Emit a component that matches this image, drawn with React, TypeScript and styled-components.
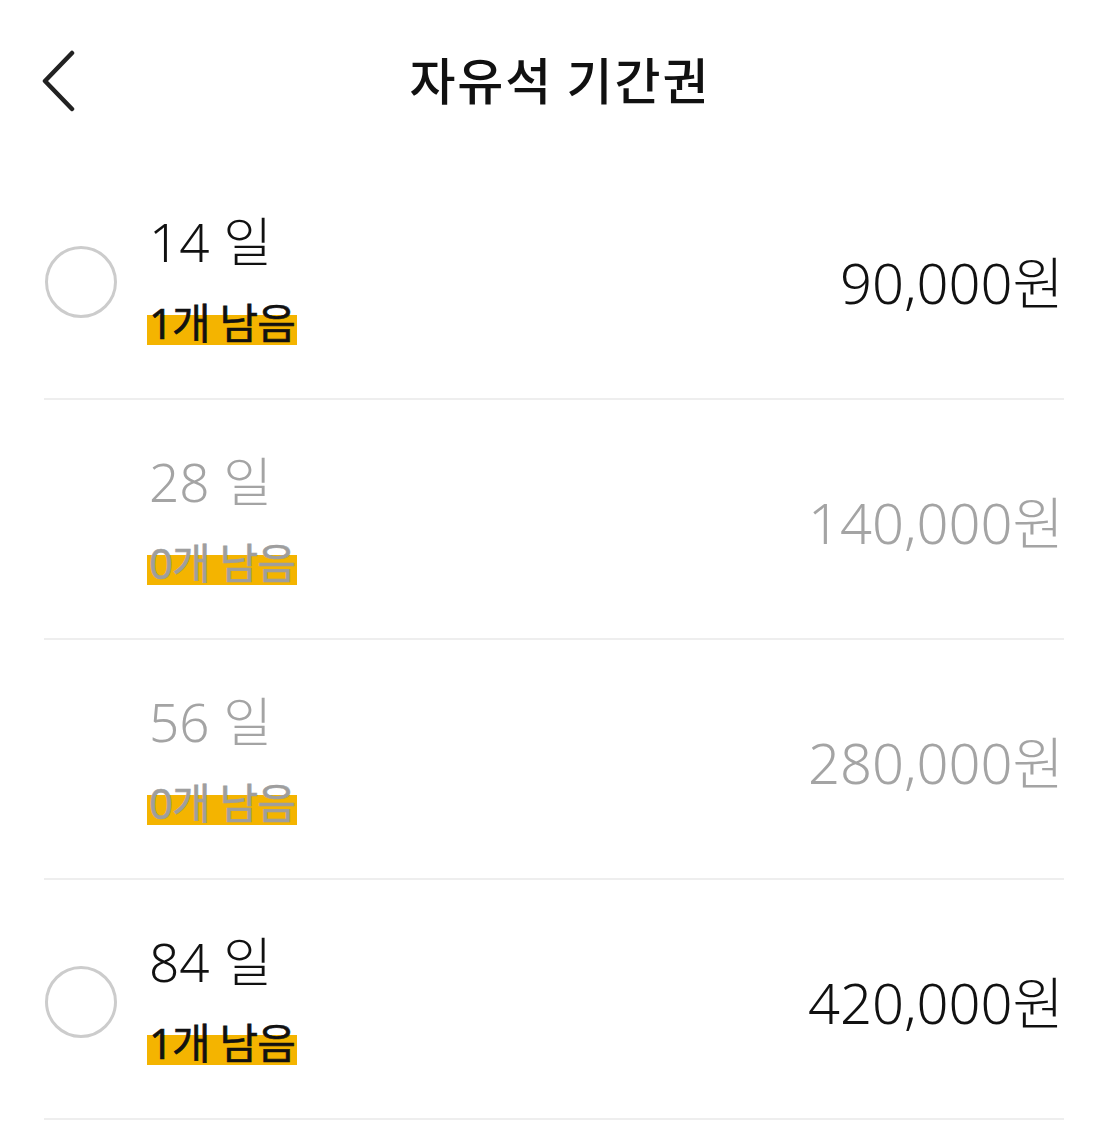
import styled, { createGlobalStyle } from 'styled-components';

interface Pass {
    days: number;
    left: number;
    price: string;
}

const passes: Pass[] = [
    { days: 14, left: 1, price: '90,000원' },
    { days: 28, left: 0, price: '140,000원' },
    { days: 56, left: 0, price: '280,000원' },
    { days: 84, left: 1, price: '420,000원' },
];

const GlobalStyle = createGlobalStyle`
    body {
        margin: 0;
        background: #fff;
        font-family: "Noto Sans", "Noto Sans CJK KR", sans-serif;
        color: #111;
    }
`;

const App = () => {
    return (
        <>
            <GlobalStyle />
            <Page>
                <Header>
                    <BackButton aria-label='back'>
                        <svg width='36' height='62' viewBox='0 0 36 62' fill='none'>
                            <path
                                d='M32 3 L5 31 L32 59'
                                stroke='#222'
                                strokeWidth='4.5'
                                strokeLinecap='round'
                                strokeLinejoin='round'
                            />
                        </svg>
                    </BackButton>
                    <Title>자유석 기간권</Title>
                </Header>
                <List>
                    {passes.map((pass) => {
                        const soldOut = pass.left === 0;
                        return (
                            <Row key={pass.days}>
                                <Radio $hidden={soldOut} />
                                <Info>
                                    <Days $muted={soldOut}>{pass.days} 일</Days>
                                    <Remaining $muted={soldOut}>
                                        {pass.left}개 남음
                                    </Remaining>
                                </Info>
                                <Price $muted={soldOut}>{pass.price}</Price>
                            </Row>
                        );
                    })}
                </List>
            </Page>
        </>
    );
};

interface MutedProps {
    $muted?: boolean;
}

const Page = styled.div`
    width: 1120px;
`;

const Header = styled.header`
    position: relative;
    height: 160px;
    display: flex;
    align-items: center;
    justify-content: center;
`;

const BackButton = styled.button`
    position: absolute;
    left: 40px;
    top: 50px;
    border: none;
    background: none;
    padding: 0;
    display: flex;
`;

const Title = styled.h1`
    margin: 0 0 5px 0;
    font-family: "Noto Sans CJK KR", sans-serif;
    font-size: 50px;
    font-weight: 500;
    letter-spacing: 2px;
    color: #111;
`;

const List = styled.ul`
    list-style: none;
    margin: 0 56px 0 44px;
    padding: 0;
`;

const Row = styled.li`
    height: 238px;
    display: flex;
    align-items: center;
    border-bottom: 2px solid #eeeeee;
`;

const Radio = styled.span<{ $hidden?: boolean }>`
    width: 66px;
    height: 66px;
    border-radius: 50%;
    border: 3px solid #cccccc;
    flex-shrink: 0;
    margin: 6px 32px 0 1px;
    visibility: ${(props) => (props.$hidden ? 'hidden' : 'visible')};
`;

const Info = styled.div`
    flex: 1;
    display: flex;
    flex-direction: column;
    align-items: flex-start;
    margin-top: -4px;
`;

const Days = styled.div<MutedProps>`
    font-size: 53px;
    font-weight: 300;
    line-height: 66px;
    color: ${(props) => (props.$muted ? '#a4a4a4' : '#111')};
`;

const Remaining = styled.div<MutedProps>`
    margin-top: 26px;
    margin-left: -2px;
    padding: 0 2px;
    font-size: 42px;
    font-weight: 400;
    line-height: 44px;
    letter-spacing: -1px;
    color: ${(props) => (props.$muted ? '#9e9e9e' : '#111')};
    -webkit-text-stroke: 0.6px currentColor;
    background: linear-gradient(transparent 32%, #f4b400 32%, #f4b400 100%);
`;

const Price = styled.div<MutedProps>`
    font-size: 56px;
    font-weight: 300;
    color: ${(props) => (props.$muted ? '#a4a4a4' : '#111')};
`;

export default App;
